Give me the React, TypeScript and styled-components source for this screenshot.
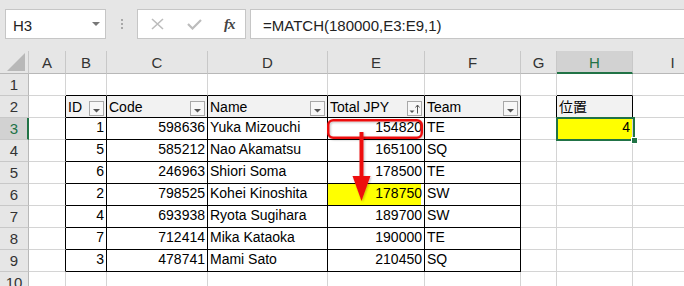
import React from "react";
import styled, { createGlobalStyle } from "styled-components";

const GlobalStyle = createGlobalStyle`
  html, body { margin: 0; padding: 0; background: #fff; }
  body { font-family: "Liberation Sans", Arial, sans-serif; }
`;

const Page = styled.div`
  width: 684px;
  height: 286px;
  overflow: hidden;
  background: #e6e6e6;
`;

const FormulaBar = styled.div`
  height: 51px;
  box-sizing: border-box;
  display: flex;
  align-items: flex-start;
  padding: 9px 0 0 5px;
  background: #e6e6e6;
`;

const NameBox = styled.div`
  width: 101px;
  height: 30px;
  box-sizing: border-box;
  flex: none;
  background: #fff;
  border: 1px solid #c6c6c6;
  display: flex;
  align-items: center;
  justify-content: space-between;
  padding: 3px 5px 0 7px;
  font-size: 15px;
  color: #222;
`;

const Caret = styled.span`
  width: 0;
  height: 0;
  border-left: 4px solid transparent;
  border-right: 4px solid transparent;
  border-top: 4px solid #777;
  margin-top: -3px;
`;

const Grip = styled.div`
  width: 2px;
  margin: 10px 14px 0 15px;
  display: flex;
  flex-direction: column;
  gap: 2px;
  span {
    width: 2px;
    height: 2px;
    background: #a8a8a8;
  }
`;

const FnBox = styled.div`
  width: 109px;
  height: 30px;
  box-sizing: border-box;
  flex: none;
  background: #fff;
  border: 1px solid #c6c6c6;
  display: flex;
  align-items: center;
  padding-left: 12px;
`;

const FnIcon = styled.span<{ $w: number }>`
  width: ${(p) => p.$w}px;
  display: flex;
  align-items: center;
  justify-content: center;
`;

const Fx = styled.span`
  font-family: "Liberation Serif", "Times New Roman", serif;
  font-style: italic;
  font-weight: bold;
  font-size: 15px;
  color: #444;
  letter-spacing: -1px;
`;

const FormulaInput = styled.div`
  flex: 1;
  height: 30px;
  margin-left: 4px;
  margin-right: -4px;
  box-sizing: border-box;
  background: #fff;
  border: 1px solid #c6c6c6;
  display: flex;
  align-items: center;
  padding: 3px 0 0 12px;
  font-size: 15px;
  color: #222;
  white-space: nowrap;
`;

const Sheet = styled.div`
  position: relative;
  display: grid;
  grid-template-columns: 29px 37px 41px 101px 120px 97px 96px 36px 76px 80px;
  grid-template-rows: 23px repeat(10, 22px);
  background: #fff;
`;

const Corner = styled.div`
  background: #e6e6e6;
  box-sizing: border-box;
  border-right: 1px solid #c8c8c8;
  border-bottom: 1px solid #b8b8b8;
  position: relative;
  &::after {
    content: "";
    position: absolute;
    right: 3px;
    bottom: 2px;
    width: 0;
    height: 0;
    border-left: 18px solid transparent;
    border-bottom: 18px solid #b8b8b8;
  }
`;

const ColHeader = styled.div<{ $sel?: boolean }>`
  box-sizing: border-box;
  background: ${(p) => (p.$sel ? "#d2d2d2" : "#e6e6e6")};
  border-right: 1px solid #c8c8c8;
  border-bottom: ${(p) => (p.$sel ? "2px solid #217346" : "1px solid #b8b8b8")};
  display: flex;
  align-items: center;
  justify-content: center;
  padding-top: ${(p) => (p.$sel ? "1px" : "0")};
  font-size: 15px;
  color: ${(p) => (p.$sel ? "#217346" : "#333")};
`;

const RowHeader = styled.div<{ $sel?: boolean }>`
  box-sizing: border-box;
  background: ${(p) => (p.$sel ? "#d2d2d2" : "#e6e6e6")};
  border-right: ${(p) => (p.$sel ? "2px solid #217346" : "1px solid #b8b8b8")};
  border-bottom: 1px solid #c8c8c8;
  display: flex;
  align-items: center;
  justify-content: center;
  padding-left: ${(p) => (p.$sel ? "1px" : "0")};
  font-size: 15px;
  color: ${(p) => (p.$sel ? "#217346" : "#333")};
`;

type CellProps = {
  $align?: "left" | "right";
  $rb?: boolean;
  $bb?: boolean;
  $head?: boolean;
  $fill?: string;
  $fillInset?: number;
};

const Cell = styled.div<CellProps>`
  box-sizing: border-box;
  min-width: 0;
  border-right: 1px solid ${(p) => (p.$rb ? "#000" : "#d4d4d4")};
  border-bottom: 1px solid ${(p) => (p.$bb ? "#000" : "#d4d4d4")};
  background: ${(p) =>
    p.$fill
      ? `linear-gradient(90deg, ${p.$fill} calc(100% - ${p.$fillInset || 0}px), #fff calc(100% - ${p.$fillInset || 0}px))`
      : p.$head
      ? "#f2f2f2"
      : "#fff"};
  display: flex;
  align-items: flex-end;
  justify-content: ${(p) => (p.$align === "right" ? "flex-end" : "space-between")};
  padding: 0 2px ${(p) => (p.$head ? "2px" : "4px")} 2px;
  font-size: 14px;
  line-height: 16px;
  color: #000;
  white-space: nowrap;
  overflow: hidden;
`;

const CellText = styled.span`
  font-family: "Liberation Sans", "Noto Sans CJK JP", Arial, sans-serif;
`;

const FilterButton = styled.span`
  flex: none;
  align-self: flex-end;
  width: 15px;
  height: 15px;
  box-sizing: border-box;
  border: 1px solid #a8a8a8;
  background: #f7f7f7;
  margin: 0 0 -1px 0;
  display: flex;
  align-items: flex-end;
  justify-content: center;
`;

const Overlay = styled.svg`
  position: absolute;
  left: 0;
  top: 0;
  width: 684px;
  height: 240px;
  pointer-events: none;
  overflow: visible;
`;

const Selection = styled.div`
  position: absolute;
  left: 556px;
  top: 66px;
  width: 79px;
  height: 24px;
  box-sizing: border-box;
  border: 2px solid #217346;
  pointer-events: none;
`;

const FillHandle = styled.span`
  position: absolute;
  right: -5px;
  bottom: -5px;
  width: 7px;
  height: 7px;
  box-sizing: border-box;
  background: #217346;
  border: 1px solid #fff;
`;

const cols = ["A", "B", "C", "D", "E", "F", "G", "H", "I"];

const headers = ["ID", "Code", "Name", "Total JPY", "Team"];

const data: [number, number, string, number, string][] = [
  [1, 598636, "Yuka Mizouchi", 154820, "TE"],
  [5, 585212, "Nao Akamatsu", 165100, "SQ"],
  [6, 246963, "Shiori Soma", 178500, "TE"],
  [2, 798525, "Kohei Kinoshita", 178750, "SW"],
  [4, 693938, "Ryota Sugihara", 189700, "SW"],
  [7, 712414, "Mika Kataoka", 190000, "TE"],
  [3, 478741, "Mami Sato", 210450, "SQ"],
];

const DropArrow = () => (
  <svg width="13" height="9" viewBox="0 0 13 9">
    <path d="M3 3 L10 3 L6.5 6.5 Z" fill="#555" />
  </svg>
);

const SortArrow = () => (
  <svg width="13" height="13" viewBox="0 0 13 13">
    <path d="M1.5 8.5 L6.5 8.5 L4 11 Z" fill="#555" />
    <path d="M9.5 3 L9.5 11.5" stroke="#555" strokeWidth="1" />
    <path d="M7.5 5.5 L9.5 3 L11.5 5.5" stroke="#555" strokeWidth="1" fill="none" />
  </svg>
);

function renderCell(row: number, ci: number) {
  const col = cols[ci];
  const key = `${col}${row}`;
  const inTable = ci >= 1 && ci <= 5 && row >= 2 && row <= 9;
  if (inTable) {
    if (row === 2) {
      return (
        <Cell key={key} $rb $bb $head>
          <CellText>{headers[ci - 1]}</CellText>
          <FilterButton>{ci === 4 ? <SortArrow /> : <DropArrow />}</FilterButton>
        </Cell>
      );
    }
    const rec = data[row - 3];
    const v = rec[ci - 1];
    const isNum = typeof v === "number";
    const hl = ci === 4 && row === 6;
    return (
      <Cell
        key={key}
        $rb
        $bb
        $align={isNum ? "right" : "left"}
        $fill={hl ? "#ffff00" : undefined}
        $fillInset={hl ? 3 : 0}
      >
        <CellText>{v}</CellText>
      </Cell>
    );
  }
  const rb = (ci === 0 && row >= 2 && row <= 9) || (ci === 6 && row === 2);
  const bb = (ci >= 1 && ci <= 5 && row === 1) || (ci === 7 && row === 1);
  if (ci === 7 && row === 2) {
    return (
      <Cell key={key} $rb $bb $head>
        <CellText>位置</CellText>
      </Cell>
    );
  }
  if (ci === 7 && row === 3) {
    return (
      <Cell key={key} $align="right" $fill="#ffff00">
        <CellText>4</CellText>
      </Cell>
    );
  }
  return <Cell key={key} $rb={rb} $bb={bb} />;
}

export default function App() {
  const rows = Array.from({ length: 10 }, (_, i) => i + 1);
  return (
    <>
      <GlobalStyle />
      <Page>
        <FormulaBar>
          <NameBox>
            <span>H3</span>
            <Caret />
          </NameBox>
          <Grip>
            <span />
            <span />
            <span />
          </Grip>
          <FnBox>
            <FnIcon $w={14}>
              <svg width="13" height="12" viewBox="0 0 13 12">
                <path d="M1 1 L12 11 M12 1 L1 11" stroke="#bcbcbc" strokeWidth="1.6" />
              </svg>
            </FnIcon>
            <FnIcon $w={60}>
              <svg width="15" height="11" viewBox="0 0 15 11">
                <path d="M1 5 L5.5 9.5 L14 1" stroke="#bcbcbc" strokeWidth="2.2" fill="none" />
              </svg>
            </FnIcon>
            <Fx>fx</Fx>
          </FnBox>
          <FormulaInput>=MATCH(180000,E3:E9,1)</FormulaInput>
        </FormulaBar>
        <Sheet>
          <Corner />
          {cols.map((c) => (
            <ColHeader key={c} $sel={c === "H"}>
              {c}
            </ColHeader>
          ))}
          {rows.map((r) => (
            <React.Fragment key={r}>
              <RowHeader $sel={r === 3}>{r}</RowHeader>
              {cols.map((_, ci) => renderCell(r, ci))}
            </React.Fragment>
          ))}
          <Overlay viewBox="0 0 684 240">
            <defs>
              <filter id="soft" x="-20%" y="-20%" width="140%" height="140%">
                <feDropShadow dx="1" dy="1" stdDeviation="1" floodColor="#000" floodOpacity="0.25" />
              </filter>
            </defs>
            <rect
              x="328.25"
              y="69.25"
              width="93.5"
              height="17.5"
              rx="5"
              fill="none"
              stroke="#ee1111"
              strokeWidth="2.5"
              filter="url(#soft)"
            />
            <g filter="url(#soft)">
              <rect x="359.5" y="81" width="4" height="45" fill="#ee1111" />
              <path d="M352.5 125 L370.5 125 L361.5 150 Z" fill="#ee1111" />
            </g>
          </Overlay>
          <Selection>
            <FillHandle />
          </Selection>
        </Sheet>
      </Page>
    </>
  );
}
